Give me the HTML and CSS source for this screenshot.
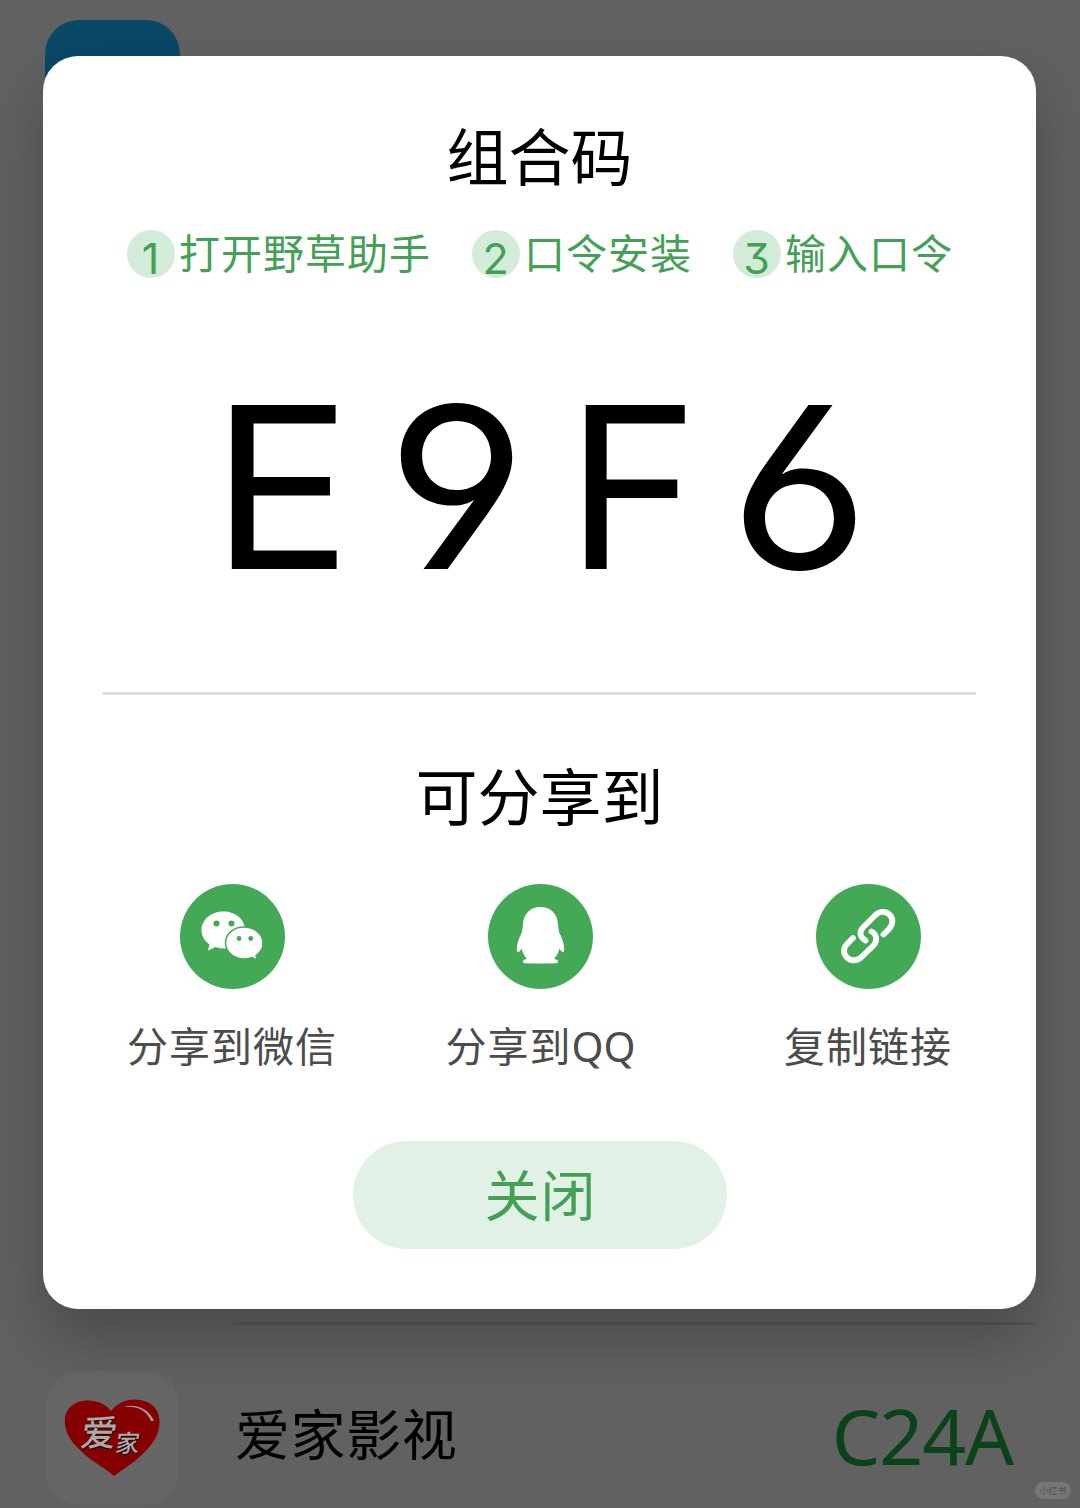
FILE: index.html
```html
<!DOCTYPE html>
<html lang="zh-CN">
<head>
<meta charset="utf-8">
<title>组合码</title>
<link rel="stylesheet" href="styles.css">
</head>
<body>
<div class="app-list">
  <div class="app-row app-row-first"><div class="app-icon app-icon-blue"></div></div>
  <div class="app-row app-row-last">
    <div class="app-icon app-icon-heart">
      <svg class="heart" viewBox="0 0 98 78">
        <path d="M51 77C43 69 26 62 12 46C-3 29 -1 9 15 3C28 -1 41 3 48 12C57 0 73 -2 84 3C99 9 100 29 90 43C79 59 63 68 51 77Z" fill="#860000"/>
        <path d="M60 8C72 4 86 9 91 22L88 22C83 11 74 7 60 8Z" fill="#999"/>
      </svg>
      <span class="heart-text"><span class="heart-big">爱</span><span class="heart-small">家</span></span>
    </div>
    <div class="app-name">爱家影视</div>
    <div class="app-code">C24A</div>
  </div>
</div>
<div class="watermark">小红书</div>

<div class="dialog">
  <h1 class="title">组合码</h1>
  <div class="steps">
    <div class="step"><span class="badge">1</span><span>打开野草助手</span></div>
    <div class="step"><span class="badge">2</span><span>口令安装</span></div>
    <div class="step"><span class="badge">3</span><span>输入口令</span></div>
  </div>
  <div class="code"><span class="glyph-e">E</span><span class="glyph-9">9</span><span class="glyph-f">F</span><span class="glyph-6">6</span></div>
  <div class="divider"></div>
  <h2 class="title share-title">可分享到</h2>
  <div class="share">
    <div class="share-item">
      <svg class="share-icon" viewBox="0 0 105 105">
        <circle cx="52.5" cy="52.5" r="52.5" fill="#43a956"/>
        <path d="M43.500 27.500C31.500 27.500 21.500 35.500 21.500 46C21.500 52 24.500 57 29.500 60.500L28 66.500L35.500 63Q39 64.500 45 64.500C57 64 65 56 65 46C65 35.500 55.500 27.500 43.500 27.500Z" fill="#fff"/>
        <path d="M64 43C53.500 43 45.500 50 45.500 59C45.500 68 54 75 64 75Q69 75 72.500 73.500L77.500 76.500L76 71.500C80.500 68.500 83 64 83 59C83 50 74.500 43 64 43Z" fill="#fff" stroke="#43a956" stroke-width="1.5"/>
        <g fill="#43a956"><circle cx="36.500" cy="39.500" r="3"/><circle cx="51.500" cy="39.500" r="3"/><circle cx="59" cy="54.500" r="2.400"/><circle cx="70.700" cy="54.500" r="2.400"/></g>
      </svg>
      <span class="share-label">分享到微信</span>
    </div>
    <div class="share-item share-item-qq">
      <svg class="share-icon" viewBox="0 0 105 105">
        <circle cx="52.5" cy="52.5" r="52.5" fill="#43a956"/>
        <path d="M52.500 23C42 23 35.300 30 35 41L34 48C31 54 28.500 60 28.800 66C29 70 31.500 68 33.500 64.500C34.500 69 36.500 72 39 75C34.500 75 33.500 79 37 79.200C48 79.500 57 79.500 68 79.200C71.500 79 70.500 75 66 75C68.500 72 70.500 69 71.500 64.500C73.500 68 76 70 76.200 66C76.500 60 74 54 71 48L70 41C69.700 30 63 23 52.500 23Z" fill="#fff"/>
      </svg>
      <span class="share-label">分享到<span class="latin">QQ</span></span>
    </div>
    <div class="share-item">
      <svg class="share-icon" viewBox="0 0 105 105">
        <circle cx="52.5" cy="52.5" r="52.5" fill="#43a956"/>
        <g fill="none" stroke="#fff" stroke-width="5.800" stroke-linecap="round" stroke-linejoin="round">
          <path d="M67.500 50.500L73 45C82.500 35 70 22 59.500 31L47 43.500C43 48 43.500 53 49.500 56.500"/>
          <path d="M37 54L31 60C22 69 35 82 45 73.500L57.500 61.500C62 56 60.500 50 55.500 47.500"/>
        </g>
      </svg>
      <span class="share-label">复制链接</span>
    </div>
  </div>
  <button class="close">关闭</button>
</div>
</body>
</html>
```
FILE: styles.css
```css
* { box-sizing: border-box; }
body {
  position: relative;
  margin: 0;
  width: 1080px;
  height: 1508px;
  overflow: hidden;
  background: #616161;
  color: #000;
  font-family: Lato, "Noto Sans CJK SC", sans-serif;
}
.app-list {
  display: flex;
  flex-direction: column;
  height: 100%;
  padding: 20px 45px 0;
}
.app-row { display: flex; }
.app-row-first { height: 1302px; }
.app-row-last {
  flex: 1;
  align-items: flex-start;
  padding: 46px 0 0 1px;
  background: linear-gradient(#575757, #575757) 188px 0 / 802px 3px no-repeat;
}
.app-icon { flex: none; width: 135px; height: 135px; border-radius: 34px; }
.app-icon-blue { background: #0a4867; }
.app-icon-heart {
  position: relative;
  width: 133px;
  height: 134px;
  margin-top: 3px;
  padding: 28px 0 0 17px;
  background: #666;
}
.heart { display: block; width: 98px; height: 78px; }
.heart-text {
  position: absolute;
  left: 35px;
  top: 35px;
  color: #aaa;
  font-family: "Noto Sans CJK SC", sans-serif;
  font-weight: 500;
  line-height: 48px;
  text-shadow: 1px 1px 1px #000;
  transform: skewX(-8deg);
  white-space: nowrap;
}
.heart-big { font-size: 36px; }
.heart-small { position: relative; top: 6px; font-size: 24px; }
.app-name { margin-left: 56px; font-size: 55px; line-height: 132px; letter-spacing: .6px; }
.app-code {
  margin: 0 22px 0 auto;
  color: #0a4319;
  font-family: "Noto Sans", sans-serif;
  font-size: 77px;
  line-height: 136px;
  letter-spacing: -1.2px;
}
.watermark {
  position: absolute;
  right: 9px;
  bottom: 9px;
  width: 36px;
  height: 17px;
  border-radius: 9px;
  background: #777;
  color: #555;
  font-size: 9px;
  line-height: 17px;
  text-align: center;
}
.dialog {
  position: absolute;
  left: 43px;
  top: 56px;
  width: 993px;
  height: 1253px;
  padding-top: 56px;
  border-radius: 35px;
  background: #fff;
  box-shadow: 0 30px 60px rgba(0, 0, 0, .24);
}
.title {
  height: 90px;
  margin: 0;
  font-size: 62px;
  font-weight: 400;
  line-height: 90px;
  text-align: center;
}
.steps {
  display: flex;
  justify-content: space-between;
  margin: 28px 83px 0 84px;
  color: #43a156;
  font-size: 41px;
  letter-spacing: 1px;
  line-height: 47px;
  white-space: nowrap;
}
.step { display: flex; gap: 4px; height: 48px; }
.badge {
  width: 48px;
  height: 48px;
  padding-top: 5px;
  border-radius: 50%;
  background: #d3ebd9;
  font-family: Inter, sans-serif;
  font-feature-settings: "cv09";
  font-size: 43px;
  text-align: center;
}
.code {
  display: flex;
  justify-content: center;
  height: 414px;
  font-family: Inter, sans-serif;
  font-feature-settings: "cv03", "cv04";
  font-size: 225px;
  line-height: 419px;
}
.glyph-e { margin-right: 41.5px; transform: scaleX(1.04); }
.glyph-9 { margin-right: 44px; transform: scaleX(1.07); }
.glyph-f { margin-right: 35px; }
.glyph-6 { transform: scaleX(1.07); }
.divider { height: 3px; margin: 0 60px; background: #dcdcdc; }
.share-title { margin-top: 57px; }
.share {
  display: grid;
  grid-template-columns: 1fr auto 1fr;
  margin: 42px 84px 0;
}
.share-item { display: flex; flex-direction: column; align-items: center; }
.share-item:first-child { justify-self: start; }
.share-item:last-child { justify-self: end; }
.share-item-qq { padding-left: 2px; }
.share-icon { width: 105px; height: 105px; }
.share-label {
  height: 62px;
  margin-top: 27px;
  color: #4c4c4c;
  font-size: 41px;
  letter-spacing: 1px;
  line-height: 62px;
  white-space: nowrap;
}
.latin { font-family: "Noto Sans", sans-serif; letter-spacing: 0; line-height: 1; }
.close {
  display: block;
  width: 374px;
  height: 108px;
  margin: 63px auto 0;
  padding: 0 0 0 2px;
  border: 0;
  border-radius: 54px;
  background: #e1f1e6;
  color: #43a156;
  font-family: inherit;
  font-size: 55px;
  letter-spacing: 1px;
  line-height: 106px;
}
```
